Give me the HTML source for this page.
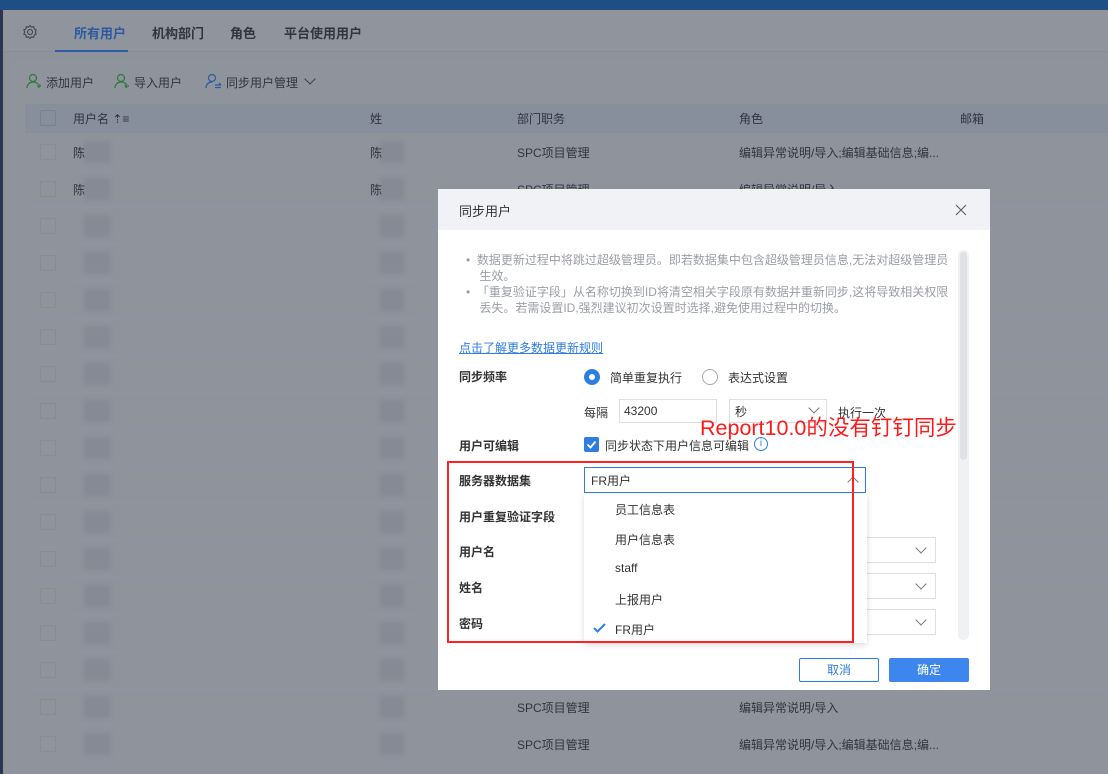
<!DOCTYPE html>
<html><head><meta charset="utf-8"><style>
*{margin:0;padding:0;box-sizing:border-box}
body{width:1108px;height:774px;overflow:hidden;background:#8d929b;font-family:"Liberation Sans","Noto Sans CJK SC",sans-serif;font-size:13px;color:#30353f;position:relative}
.a{position:absolute;white-space:nowrap}
.top{left:0;top:0;width:1108px;height:10px;background:#1e4f84}
.left{left:0;top:10px;width:3px;height:764px;background:#2b3550}
.tabs{left:3px;top:10px;width:1105px;height:42px;background:#8f949d;border-bottom:1px solid #878c96}
.hd{left:25px;top:104px;width:1083px;height:29px;background:#878e9c}
.line{left:25px;height:1px;background:#8c95a9;width:1083px}
.cb{width:16px;height:16px;border:1px solid #7c828d;border-radius:2px}
.blur{background:#858a94;filter:blur(2px)}
.dlg{left:438px;top:189px;width:552px;height:501px;background:#fff}
.dh{left:438px;top:189px;width:552px;height:41px;background:#f1f2f5}
.g{color:#9a9ea6;font-size:12px}
.lb{color:#333;font-size:13px;font-weight:bold;left:459px}
.inp{border:1px solid #dcdfe6;background:#fff}
.chev{width:8px;height:8px;border-right:1px solid #777;border-bottom:1px solid #777;transform:rotate(45deg)}
.item{left:615px;font-size:12px;color:#333}
</style></head><body>
<div class="a top"></div><div class="a left"></div>
<div class="a tabs"></div>
<svg class="a" style="left:22px;top:24px" width="16" height="16" viewBox="0 0 16 16"><circle cx="8" cy="8" r="2.5" fill="none" stroke="#3a3f4a"/><path d="M8 1.5l1.5 1.6 2.2-.4.5 2.2 2 1-.9 2.1.9 2.1-2 1-.5 2.2-2.2-.4L8 14.5l-1.5-1.6-2.2.4-.5-2.2-2-1 .9-2.1-.9-2.1 2-1 .5-2.2 2.2.4z" fill="none" stroke="#3a3f4a"/></svg>
<div class="a" style="left:74px;top:23px;color:#2d5aa0;font-weight:bold">所有用户</div>
<div class="a" style="left:55px;top:50px;width:73px;height:2px;background:#2d5aa0"></div>
<div class="a" style="left:152px;top:23px;font-weight:bold">机构部门</div>
<div class="a" style="left:230px;top:23px;font-weight:bold">角色</div>
<div class="a" style="left:284px;top:23px;font-weight:bold">平台使用用户</div>
<div class="a" style="left:12px;top:62px;width:1096px;height:712px;background:#8e939c"></div>
<svg class="a" style="left:26px;top:73px" width="16" height="16" viewBox="0 0 16 16" fill="none" stroke="#2f7a3a" stroke-width="1.2"><circle cx="7" cy="5" r="3.5"/><path d="M1 15c0-4 3-6 6-6s4 1 5 2M11 13h4M13 11v4"/></svg>
<div class="a" style="left:46px;top:74px;font-size:12px">添加用户</div>
<svg class="a" style="left:114px;top:73px" width="16" height="16" viewBox="0 0 16 16" fill="none" stroke="#2f7a3a" stroke-width="1.2"><circle cx="7" cy="5" r="3.5"/><path d="M1 15c0-4 3-6 6-6s4 1 5 2M15 13h-4M13 11l-2 2 2 2"/></svg>
<div class="a" style="left:134px;top:74px;font-size:12px">导入用户</div>
<svg class="a" style="left:205px;top:73px" width="18" height="16" viewBox="0 0 18 16" fill="none" stroke="#2d5aa0" stroke-width="1.2"><circle cx="7" cy="5" r="3.5"/><path d="M1 15c0-4 3-6 6-6M10 12h6M10 14.5h6M14 10l2 2"/></svg>
<div class="a" style="left:226px;top:74px;font-size:12px">同步用户管理</div>
<div class="a chev" style="left:306px;top:75px;border-color:#3a3f4a"></div>
<div class="a hd"></div>
<div class="a cb" style="left:40px;top:110px"></div>
<div class="a" style="left:73px;top:110px;font-size:12px">用户名 ⇡≡</div>
<div class="a" style="left:370px;top:110px;font-size:12px">姓</div>
<div class="a" style="left:517px;top:110px;font-size:12px">部门职务</div>
<div class="a" style="left:739px;top:110px;font-size:12px">角色</div>
<div class="a" style="left:960px;top:110px;font-size:12px">邮箱</div>
<div id="rows"></div>
<script>
var h='';
for(var i=0;i<17;i++){var y=133+37*i;
h+='<div class="a line" style="top:'+(y+37)+'px"></div>';
h+='<div class="a cb" style="left:40px;top:'+(y+11)+'px;border-color:#868b95"></div>';
h+='<div class="a blur" style="left:84px;top:'+(y+8)+'px;width:26px;height:22px"></div>';
h+='<div class="a blur" style="left:380px;top:'+(y+8)+'px;width:24px;height:22px"></div>';
if(i<2){h+='<div class="a" style="left:73px;top:'+(y+11)+'px;font-size:12px">陈</div><div class="a" style="left:370px;top:'+(y+11)+'px;font-size:12px">陈</div>';}
if(i<2||i>14){h+='<div class="a" style="left:517px;top:'+(y+11)+'px;font-size:12px">SPC项目管理</div><div class="a" style="left:739px;top:'+(y+11)+'px;font-size:12px">'+(i%2==0?'编辑异常说明/导入;编辑基础信息;编...':'编辑异常说明/导入')+'</div>';}
}
document.getElementById('rows').innerHTML=h;
</script>
<div class="a dlg"></div><div class="a dh"></div>
<div class="a" style="left:459px;top:201px;font-size:13px;color:#333">同步用户</div>
<svg class="a" style="left:955px;top:204px" width="12" height="12" viewBox="0 0 12 12" stroke="#666" stroke-width="1.2"><path d="M1 1l10 10M11 1L1 11"/></svg>
<div class="a g" style="left:466px;top:252px;white-space:normal;width:488px;line-height:16px">•&nbsp; 数据更新过程中将跳过超级管理员。即若数据集中包含超级管理员信息,无法对超级管理员<br>&nbsp;&nbsp;&nbsp; 生效。<br>•&nbsp; 「重复验证字段」从名称切换到ID将清空相关字段原有数据并重新同步,这将导致相关权限<br>&nbsp;&nbsp;&nbsp; 丢失。若需设置ID,强烈建议初次设置时选择,避免使用过程中的切换。</div>
<div class="a" style="left:958px;top:250px;width:11px;height:390px;background:#f0f1f3;border-radius:5px"></div>
<div class="a" style="left:960px;top:252px;width:7px;height:208px;background:#dfe1e5;border-radius:4px"></div>
<div class="a" style="left:459px;top:339px;font-size:12px;color:#2f7de1;text-decoration:underline">点击了解更多数据更新规则</div>
<div class="a lb" style="top:368px;font-size:12px">同步频率</div>
<div class="a" style="left:584px;top:369px;width:16px;height:16px;border-radius:50%;background:#2f7de1"></div>
<div class="a" style="left:589px;top:374px;width:6px;height:6px;border-radius:50%;background:#fff"></div>
<div class="a" style="left:610px;top:369px;font-size:12px;color:#333">简单重复执行</div>
<div class="a" style="left:702px;top:369px;width:16px;height:16px;border-radius:50%;border:1px solid #aaa"></div>
<div class="a" style="left:728px;top:369px;font-size:12px;color:#333">表达式设置</div>
<div class="a" style="left:584px;top:404px;font-size:12px;color:#333">每隔</div>
<div class="a inp" style="left:619px;top:399px;width:98px;height:24px"></div>
<div class="a" style="left:624px;top:404px;font-size:12px;color:#333">43200</div>
<div class="a inp" style="left:729px;top:399px;width:98px;height:24px"></div>
<div class="a" style="left:735px;top:403px;font-size:12px;color:#333">秒</div>
<div class="a chev" style="left:810px;top:404px"></div>
<div class="a" style="left:838px;top:404px;font-size:12px;color:#333">执行一次</div>
<div class="a" style="left:700px;top:411px;font-size:21.5px;color:#ff1a1a">Report10.0的没有钉钉同步</div>
<div class="a lb" style="top:437px;font-size:12px">用户可编辑</div>
<div class="a" style="left:584px;top:437px;width:15px;height:15px;border-radius:2px;background:#2f7de1"></div>
<svg class="a" style="left:584px;top:437px" width="15" height="15" viewBox="0 0 15 15" fill="none" stroke="#fff" stroke-width="1.8"><path d="M3.5 7.5l3 3 5-6"/></svg>
<div class="a" style="left:605px;top:437px;font-size:12px;color:#333">同步状态下用户信息可编辑</div>
<div class="a" style="left:754px;top:437px;width:14px;height:14px;border-radius:50%;border:1px solid #2f7de1;color:#2f7de1;font-size:10px;text-align:center;line-height:12px">i</div>
<div class="a lb" style="top:472px;font-size:12px">服务器数据集</div>
<div class="a lb" style="top:508px;font-size:12px">用户重复验证字段</div>
<div class="a lb" style="top:543px;font-size:12px">用户名</div>
<div class="a lb" style="top:579px;font-size:12px">姓名</div>
<div class="a lb" style="top:615px;font-size:12px">密码</div>
<div class="a inp" style="left:584px;top:537px;width:352px;height:26px"></div>
<div class="a inp" style="left:584px;top:573px;width:352px;height:26px"></div>
<div class="a inp" style="left:584px;top:609px;width:352px;height:26px"></div>
<div class="a chev" style="left:917px;top:544px"></div>
<div class="a chev" style="left:917px;top:580px"></div>
<div class="a chev" style="left:917px;top:616px"></div>
<div class="a" style="left:584px;top:467px;width:282px;height:26px;border:1px solid #2f7de1;background:#fff"></div>
<div class="a" style="left:591px;top:472px;font-size:12px;color:#333">FR用户</div>
<div class="a chev" style="left:849px;top:478px;transform:rotate(225deg)"></div>
<div class="a" style="left:584px;top:494px;width:283px;height:149px;background:#fff;box-shadow:0 2px 6px rgba(0,0,0,.15)"></div>
<div class="a item" style="top:501px">员工信息表</div>
<div class="a item" style="top:531px">用户信息表</div>
<div class="a item" style="top:561px">staff</div>
<div class="a item" style="top:591px">上报用户</div>
<div class="a item" style="top:621px">FR用户</div>
<svg class="a" style="left:593px;top:623px" width="13" height="10" viewBox="0 0 13 10" fill="none" stroke="#2f7de1" stroke-width="2"><path d="M1 5l3.5 3.5L12 1"/></svg>
<div class="a" style="left:447px;top:461px;width:407px;height:182px;border:2px solid #ff2020"></div>
<div class="a" style="left:799px;top:658px;width:80px;height:24px;border:1px solid #2f7de1;border-radius:2px;color:#2f7de1;font-size:12px;text-align:center;line-height:22px">取消</div>
<div class="a" style="left:889px;top:658px;width:80px;height:24px;background:#3d86ee;border-radius:2px;color:#fff;font-size:12px;text-align:center;line-height:24px">确定</div>
</body></html>
